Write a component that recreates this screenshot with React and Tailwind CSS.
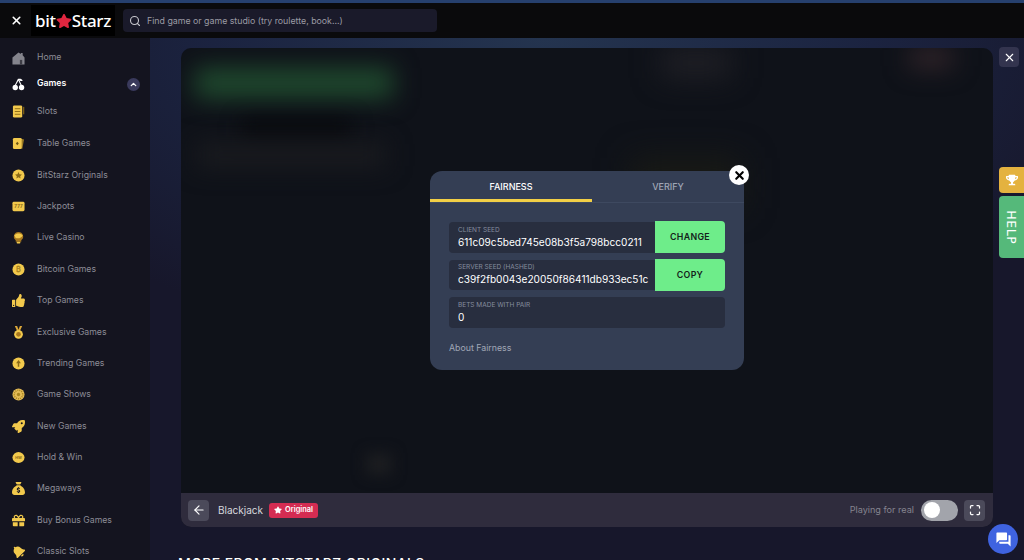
import React from "react";
import { Search, X, ChevronUp, ArrowLeft, Maximize } from "lucide-react";
import { FaThumbsUp, FaRocket, FaGift, FaBell, FaStar, FaTrophy } from "react-icons/fa";
import { FaSackDollar } from "react-icons/fa6";
import { MdQuestionAnswer } from "react-icons/md";

const Y = "#f2c94c";

const Coin = ({ children }) => (
  <svg viewBox="0 0 14 14" className="w-[13px] h-[13px]">
    <circle cx="7" cy="7" r="6.5" fill={Y} />
    {children}
  </svg>
);

const icons = {
  home: (
    <svg viewBox="0 0 14 14" className="w-[13px] h-[13px]">
      <path d="M7 .5l2.500 1.700V1h2v2.600L13.500 6v7.500H.5V6z" fill="#84848c" />
      <rect x="8.500" y="8.500" width="2.500" height="5" fill="#3d3d45" />
    </svg>
  ),
  games: (
    <svg viewBox="0 0 14 14" className="w-[13px] h-[13px]">
      <path d="M7 1C6 3.500 4.500 5.500 3.500 8M7 1c.5 2.500 2 5 3 7" fill="none" stroke="#fff" strokeWidth="1.200" />
      <path d="M7 1c2-.5 3.500 0 4.500 2-2 .5-3.500 0-4.500-2z" fill="#fff" />
      <circle cx="3.500" cy="10.300" r="2.900" fill="#fff" />
      <circle cx="10.300" cy="10.300" r="2.900" fill="#fff" />
    </svg>
  ),
  slots: (
    <svg viewBox="0 0 14 14" className="w-[13px] h-[13px]">
      <rect x="1" y="0.500" width="10" height="13" rx="1.500" fill={Y} />
      <path d="M3 4h6M3 7h6M3 10h6" stroke="#8a6a16" strokeWidth="1" />
      <rect x="12" y="2" width="1.200" height="8" fill="#8a6a16" />
    </svg>
  ),
  table: (
    <svg viewBox="0 0 14 14" className="w-[13px] h-[13px]">
      <path d="M10 2l3 .8-2 10-1-.3z" fill="#9a7a22" />
      <rect x="1" y="1" width="9.500" height="12" rx="1.500" fill={Y} />
      <path d="M5.700 5l1.600 2-1.600 2-1.600-2z" fill="#6b5212" />
    </svg>
  ),
  originals: (
    <Coin>
      <path d="M7 3.200l1.100 2.400 2.600.3-1.900 1.800.5 2.600L7 9l-2.300 1.300.5-2.600-1.900-1.800 2.600-.3z" fill="#8a6a16" />
    </Coin>
  ),
  jackpots: (
    <svg viewBox="0 0 14 14" className="w-[13px] h-[13px]">
      <rect x="0.500" y="2" width="13" height="10" rx="1.500" fill={Y} />
      <text x="7" y="9" textAnchor="middle" fontSize="5" fontWeight="700" fontFamily="Inter, sans-serif" fill="#8a6a16">777</text>
    </svg>
  ),
  live: (
    <svg viewBox="0 0 14 14" className="w-[13px] h-[13px]">
      <path d="M7 1a5 5 0 0 1 3 9v1.500H4V10A5 5 0 0 1 7 1z" fill="#a8781f" />
      <path d="M2.500 4.500C5 2 9 2 11.500 4.500 10.500 7.500 7 8.500 4 7.500z" fill={Y} />
      <rect x="5" y="11.500" width="4" height="2" rx="0.800" fill={Y} />
    </svg>
  ),
  bitcoin: (
    <Coin>
      <text x="7" y="10" textAnchor="middle" fontSize="8" fontWeight="700" fontFamily="Inter, sans-serif" fill="#a8841f">₿</text>
    </Coin>
  ),
  top: <FaThumbsUp className="w-[13px] h-[13px] text-[#f2c94c]" />,
  exclusive: (
    <svg viewBox="0 0 14 14" className="w-[13px] h-[13px]">
      <path d="M3 0h2.500L7.500 5 6 6.500zM11 0H8.500L6.500 5 8 6.500z" fill="#d9a63a" />
      <circle cx="7" cy="9" r="4.700" fill={Y} />
      <circle cx="7" cy="9" r="2.500" fill="#a8781f" />
    </svg>
  ),
  trending: (
    <Coin>
      <path d="M7 3.200L9.600 6.600H7.800V10.600H6.200V6.600H4.400z" fill="#8a6a16" />
    </Coin>
  ),
  shows: (
    <svg viewBox="0 0 14 14" className="w-[13px] h-[13px]">
      <circle cx="7" cy="7" r="6.500" fill="#e3bb56" />
      <circle cx="7" cy="7" r="4.600" fill="none" stroke="#a8841f" strokeWidth="1.600" strokeDasharray="1.100 1.100" />
      <circle cx="7" cy="7" r="1.800" fill="#a8841f" />
    </svg>
  ),
  new: <FaRocket className="w-[13px] h-[13px] text-[#f2c94c]" />,
  hold: (
    <svg viewBox="0 0 14 14" className="w-[13px] h-[13px]">
      <ellipse cx="7" cy="7" rx="6.500" ry="5.800" fill={Y} />
      <text x="7" y="8.600" textAnchor="middle" fontSize="4" fontWeight="700" fontFamily="Inter, sans-serif" fill="#8a6a16">HW</text>
    </svg>
  ),
  mega: <FaSackDollar className="w-[13px] h-[13px] text-[#f2c94c]" />,
  bonus: <FaGift className="w-[13px] h-[13px] text-[#f2c94c]" />,
  classic: <FaBell className="w-[13px] h-[13px] text-[#f2c94c] -rotate-45" />,
};

const menu = [
  ["Table Games", "table"],
  ["BitStarz Originals", "originals"],
  ["Jackpots", "jackpots"],
  ["Live Casino", "live"],
  ["Bitcoin Games", "bitcoin"],
  ["Top Games", "top"],
  ["Exclusive Games", "exclusive"],
  ["Trending Games", "trending"],
  ["Game Shows", "shows"],
  ["New Games", "new"],
  ["Hold & Win", "hold"],
  ["Megaways", "mega"],
  ["Buy Bonus Games", "bonus"],
  ["Classic Slots", "classic"],
];

function MenuItem({ icon, label, className, active, children }) {
  return (
    <div className={`flex items-center pl-[12px] pr-[10px] ${className}`}>
      <span className="w-[13px] flex justify-center shrink-0">{icons[icon]}</span>
      <span className={`ml-[12px] text-[8.7px] ${active ? "text-white font-semibold" : "text-[#8d8d97]"}`}>{label}</span>
      {children}
    </div>
  );
}

function SeedField({ label, value, action }) {
  return (
    <div className="flex items-center h-[30.5px]">
      <div className={`flex-1 min-w-0 h-[30.5px] bg-[#282e3f] pl-[9px] pt-[1px] flex flex-col justify-center ${action ? "rounded-l-[4px]" : "rounded-[4px]"}`}>
        <div className="text-[6.5px] leading-[9px] text-[#858d9e] uppercase">{label}</div>
        <div className="text-[10.1px] leading-[15px] text-white whitespace-nowrap overflow-hidden">{value}</div>
      </div>
      {action && (
        <div className="w-[70px] h-[32px] shrink-0 bg-[#6eed8a] rounded-r-[4px] flex items-center justify-center pb-[1px] text-[8.8px] font-semibold tracking-[0.3px] text-[#14231a]">
          {action}
        </div>
      )}
    </div>
  );
}

export default function App() {
  return (
    <div className="relative w-full h-[560px] overflow-hidden bg-[#16162a] font-['Inter',sans-serif]">
      <div className="h-[3px] bg-[#26406e]" />
      <header className="h-[35px] bg-[#0a0a0c] flex items-center">
        <X className="w-[13px] h-[13px] text-white ml-[10px]" strokeWidth={3} />
        <div className="ml-[8px] w-[84px] h-[31px] bg-black flex items-center justify-center text-white text-[17px] font-medium font-['Noto_Sans',sans-serif] tracking-[-0.3px]">
          bit
          <FaStar className="w-[16px] h-[16px] text-[#e0263f]" />
          Starz
        </div>
        <div className="ml-[8px] w-[314px] h-[23px] bg-[#1a1a2a] rounded-[4px] flex items-center pl-[6px]">
          <Search className="w-[12px] h-[12px] text-[#c8c8ce]" strokeWidth={2.2} />
          <span className="ml-[6px] text-[8.8px] text-[#9a9aa4]">Find game or game studio (try roulette, book...)</span>
        </div>
      </header>

      <div className="flex h-[522px]">
        <aside className="w-[150px] shrink-0 bg-[#14141f] pt-[7px]">
          <MenuItem icon="home" label="Home" className="h-[26px]" />
          <MenuItem icon="games" label="Games" active className="h-[26px]">
            <span className="ml-auto w-[13px] h-[13px] rounded-full bg-[#3a3a5c] flex items-center justify-center">
              <ChevronUp className="w-[9px] h-[9px] text-white" strokeWidth={3.5} />
            </span>
          </MenuItem>
          <MenuItem icon="slots" label="Slots" className="h-[29px] mb-[2px]" />
          <div className="flex flex-col">
            {menu.map(([label, icon]) => (
              <MenuItem key={label} icon={icon} label={label} className="h-[31.4px]" />
            ))}
          </div>
        </aside>

        <main className="relative flex-1 min-w-0 px-[31px] pt-[10px] bg-[radial-gradient(ellipse_600px_320px_at_45%_0%,#24344f,#1b2340_55%,#17172b)]">
          <div className="relative h-[479px] rounded-[10px] overflow-hidden bg-[#0f1219] flex flex-col">
            <div className="relative flex-1 flex items-center justify-center overflow-hidden">
              {/* blurred game behind the dialog */}
              <div className="absolute left-[14px] top-[20px] w-[198px] h-[30px] bg-[#1f4a2e] blur-[12px]" />
              <div className="absolute left-[60px] top-[72px] w-[110px] h-[18px] bg-[#08090c] blur-[10px]" />
              <div className="absolute left-[15px] top-[95px] w-[190px] h-[24px] bg-[#1a1b1f] blur-[12px]" />
              <div className="absolute left-[480px] top-[0px] w-[70px] h-[30px] bg-[#1f1f25] blur-[14px]" />
              <div className="absolute left-[728px] top-[0px] w-[44px] h-[20px] bg-[#33252a] blur-[12px]" />
              <div className="absolute left-[450px] top-[110px] w-[110px] h-[50px] bg-[#191a15] blur-[16px]" />
              <div className="absolute left-[185px] top-[405px] w-[26px] h-[22px] bg-[#1c1d20] blur-[7px]" />

              <div className="relative w-[314px] h-[199px] rounded-[12px] bg-[#343e54]">
                <div className="flex h-[32px] border-b border-[#3e4960] text-[9px] font-medium">
                  <div className="w-[162px] border-b-[3px] border-[#f2cf46] text-white flex items-center justify-center pt-[3px]">FAIRNESS</div>
                  <div className="flex-1 text-[#a0a7b6] flex items-center justify-center pt-[1px]">VERIFY</div>
                </div>
                <div className="px-[19px] pt-[19px] flex flex-col gap-[7px]">
                  <SeedField label="Client seed" value="611c09c5bed745e08b3f5a798bcc0211" action="CHANGE" />
                  <SeedField label="Server seed (hashed)" value="c39f2fb0043e20050f86411db933ec51c" action="COPY" />
                  <SeedField label="Bets made with pair" value="0" />
                  <div className="mt-[6.5px] text-[8.8px] text-[#a0a7b6]">About Fairness</div>
                </div>
                <button className="absolute -right-[5px] -top-[6px] w-[20px] h-[20px] rounded-full bg-white flex items-center justify-center">
                  <X className="w-[13px] h-[13px] text-black" strokeWidth={4} />
                </button>
              </div>
            </div>

            <div className="h-[34px] bg-[#2f2c3d] flex items-center shrink-0 pr-[8px] pl-[7px]">
              <span className="w-[21px] h-[21px] rounded-[4px] bg-[#4b4a5a] flex items-center justify-center">
                <ArrowLeft className="w-[14px] h-[14px] text-white" strokeWidth={2} />
              </span>
              <span className="ml-[9px] text-[10px] text-[#d8d8de]">Blackjack</span>
              <span className="ml-[6px] h-[15px] px-[5px] rounded-[3px] bg-[#d42c52] flex items-center text-[7.4px] font-semibold text-white">
                <FaStar className="w-[8px] h-[8px] mr-[3px]" />
                Original
              </span>
              <span className="ml-auto text-[9.1px] text-[#85848f]">Playing for real</span>
              <span className="ml-[7px] w-[37px] h-[21px] rounded-full bg-[#a2a4ab] flex items-center pl-[3px]">
                <span className="w-[16px] h-[16px] rounded-full bg-white" />
              </span>
              <span className="ml-[6px] w-[21px] h-[21px] rounded-[4px] bg-[#4b4a5a] flex items-center justify-center">
                <Maximize className="w-[12px] h-[12px] text-white" strokeWidth={2.5} />
              </span>
            </div>
          </div>
          <h2 className="mt-[28px] -ml-[3px] text-[14px] leading-[17px] font-medium tracking-[0.4px] text-white whitespace-nowrap">MORE FROM BITSTARZ ORIGINALS</h2>

          <button className="absolute right-[5px] top-[9px] w-[20px] h-[20px] rounded-[4px] bg-[#33344e] flex items-center justify-center">
            <X className="w-[13px] h-[13px] text-white" strokeWidth={2} />
          </button>
        </main>
      </div>

      {/* fixed tabs on the right edge */}
      <div className="absolute right-0 top-[167px] w-[25px] h-[26px] bg-[#e4b23f] rounded-l-[4px] flex items-center justify-center">
        <FaTrophy className="w-[12px] h-[12px] text-white" />
      </div>
      <div className="absolute right-0 top-[196px] w-[25px] h-[62px] bg-[#55b97a] rounded-l-[4px] flex items-center justify-center">
        <span className="rotate-90 text-[12.5px] text-white tracking-[0.6px] font-['DejaVu_Sans',sans-serif]">HELP</span>
      </div>
      <div className="absolute right-[6px] bottom-[6px] w-[30px] h-[30px] rounded-full bg-[#3f63e0] flex items-center justify-center">
        <MdQuestionAnswer className="w-[17px] h-[17px] text-white" />
      </div>
    </div>
  );
}
